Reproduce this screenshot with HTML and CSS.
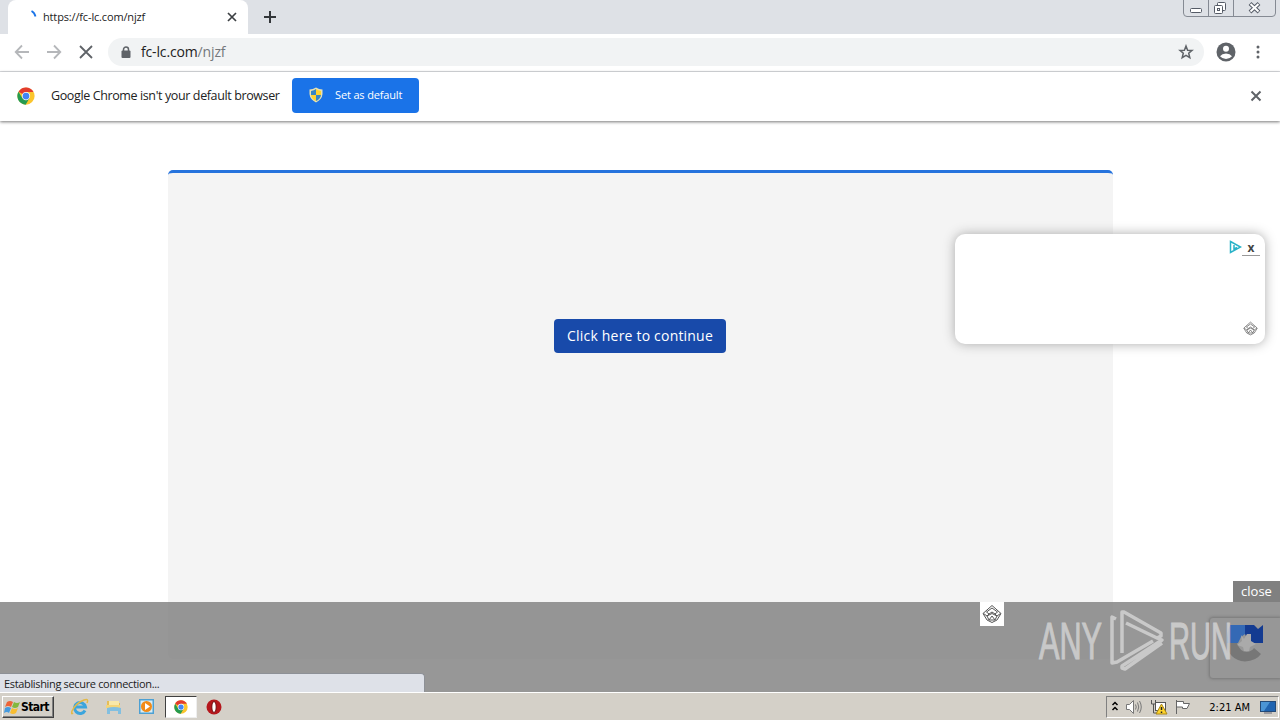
FILE: index.html
```html
<!DOCTYPE html>
<html lang="en">
<head>
    <meta charset="UTF-8">
    <title>https://fc-lc.com/njzf</title>
    <link rel="stylesheet" href="styles.css">
</head>
<body>
    <svg width="0" height="0" class="defs">
        <symbol id="chrome" viewBox="0 0 48 48">
            <circle cx="24" cy="24" r="23" fill="#fbc52d"/>
            <path d="M24 24 L4 12.500 A23 23 0 0 1 44 13 L24 13 Z" fill="#e23b2e"/>
            <path d="M4 12.500 L14.500 30 L24 35 L33.500 29.500 L23 47 A23 23 0 0 1 4 12.500" fill="#259b50"/>
            <circle cx="24" cy="24" r="11" fill="#fff"/>
            <circle cx="24" cy="24" r="9" fill="#4285f4"/>
        </symbol>
        <symbol id="gem" viewBox="0 0 20 20">
            <path d="M10 1.500 L19 9.500 L15 16 L10 18.500 L5 16 L1 9.500 Z M10 4 L15.500 8 L13 10 L10 8 L7 10 L4.500 8 Z M1.500 9.500 L5 12 L7 10 M18.500 9.500 L15 12 L13 10 M5 12 L10 9.500 L15 12 M5 12 L7 16 L10 12 L13 16 L15 12 M7 16 H13" fill="none" stroke="currentColor" stroke-width="1"/>
        </symbol>
    </svg>

    <header class="tabs">
        <div class="tab">
            <svg class="spinner" width="16" height="16"><path d="M7.500 2 Q10.500 3.500 11.500 7.500" fill="none" stroke="#1a73e8" stroke-width="1.800"/></svg>
            <span class="tab-title">https://fc-lc.com/njzf</span>
            <svg width="10" height="10"><path d="M1 1 L9 9 M9 1 L1 9" stroke="#3c4043" stroke-width="1.700"/></svg>
        </div>
        <svg class="new-tab" width="14" height="14"><path d="M7 1 V13 M1 7 H13" stroke="#33363a" stroke-width="2"/></svg>
        <svg class="window-buttons" width="94" height="18" fill="none">
            <path d="M.5 0 V13 Q.5 16.500 4 16.500 H89 Q92.500 16.500 92.500 13 V0 M25.500 0 V16 M50.500 0 V16" stroke="#858a93"/>
            <rect x="7.500" y="8.500" width="11" height="4" rx="1" fill="#fff" stroke="#555b66"/>
            <rect x="34.500" y="2.500" width="8" height="8" rx="1" fill="#fff" stroke="#555b66"/>
            <rect x="31.500" y="5.500" width="8" height="8" rx="1" fill="#fff" stroke="#555b66"/>
            <rect x="34.500" y="8.500" width="2" height="2" stroke="#555b66"/>
            <path d="M67 3.500 L76 12 M76 3.500 L67 12" stroke="#555b66" stroke-width="4"/>
            <path d="M67.500 4 L75.500 11.500 M75.500 4 L67.500 11.500" stroke="#fff" stroke-width="2"/>
        </svg>
    </header>

    <div class="toolbar">
        <svg class="nav" width="16" height="16"><path d="M15 8 H2 M8 1.500 L1.700 8 L8 14.500" fill="none" stroke="#b5b7ba" stroke-width="1.800"/></svg>
        <svg class="nav" width="16" height="16"><path d="M1 8 H14 M8 1.500 L14.300 8 L8 14.500" fill="none" stroke="#b5b7ba" stroke-width="1.800"/></svg>
        <svg class="nav" width="16" height="16"><path d="M2 2 L14 14 M14 2 L2 14" stroke="#5f6368" stroke-width="1.800"/></svg>
        <div class="address">
            <svg width="10" height="13"><path d="M2.500 5 V3.500 A2.500 2.500 0 0 1 7.500 3.500 V5" fill="none" stroke="#5f6368" stroke-width="1.500"/><rect x=".5" y="4.500" width="9" height="7.500" rx="1" fill="#5f6368"/></svg>
            <span class="url">fc-lc.com<span>/njzf</span></span>
            <svg class="star" width="16" height="16"><path d="M8 2 L9.600 6.200 L14 6.400 L10.700 9.200 L11.800 13.600 L8 11.300 L4.200 13.600 L5.300 9.200 L2 6.400 L6.400 6.200 Z" fill="none" stroke="#5f6368" stroke-width="1.500"/></svg>
        </div>
        <svg class="profile" width="20" height="20"><circle cx="10" cy="10" r="9.500" fill="#5f6368"/><circle cx="10" cy="6.800" r="3" fill="#fff"/><path d="M4 14.200 Q6 11.500 10 11.500 T16 14.200 Q13.500 17 10 17 T4 14.200" fill="#fff"/></svg>
        <svg class="menu" width="4" height="16" fill="#5f6368"><circle cx="2" cy="3" r="1.500"/><circle cx="2" cy="8" r="1.500"/><circle cx="2" cy="13" r="1.500"/></svg>
    </div>

    <div class="infobar">
        <svg width="18" height="18"><use href="#chrome"/></svg>
        <span class="info-text">Google Chrome isn't your default browser</span>
        <button class="default-button">
            <svg width="14" height="16"><path d="M7 .5 Q10 2.500 13.500 2.500 V7 Q13 12.500 7 15.500 Q1 12.500 .5 7 V2.500 Q4 2.500 7 .5" fill="#e7e2b4"/><path d="M7 2 V8 H2 V4 Q5 3.500 7 2 M7 8 H12 Q11.500 12 7 14 Z" fill="#3685c4"/><path d="M7 2 Q9 3.500 12 4 V8 H7 Z M7 8 V14 Q2.500 12 2 8 Z" fill="#ffd22e"/></svg>
            <span>Set as default</span>
        </button>
        <svg class="info-close" width="12" height="12"><path d="M1.500 1.500 L10.500 10.500 M10.500 1.500 L1.500 10.500" stroke="#5f6368" stroke-width="2"/></svg>
    </div>

    <main class="page">
        <section class="box">
            <button class="continue">Click here to continue</button>
        </section>

        <aside class="popup">
            <div class="popup-top">
                <svg width="13" height="14"><path d="M1.500 1.500 L11.500 7 L1.500 12.500 Z M5 5 V9 L8 7.500" fill="none" stroke="#29b2c8" stroke-width="1.500"/></svg>
                <span>x</span>
            </div>
            <svg class="popup-gem" width="15" height="15"><use href="#gem"/></svg>
        </aside>

        <div class="bottom-ad">
            <span class="ad-close">close</span>
            <div class="ad-mark"><svg width="20" height="20"><use href="#gem"/></svg></div>
            <div class="captcha">
                <svg width="40" height="40" viewBox="0 0 40 40">
                    <path d="M2 21 H12 Q15 30 22 30 Q27 29 29 26 L36 32 Q31 39 20 39.500 Q3 38 2 21" fill="#777"/>
                    <path d="M5 3 H20 V12 L16 15 L13 21 H2 Q2 10 5 3" fill="#3469b5"/>
                    <path d="M20 3 H29 L33 7 L38 3 V21 H24 L20 12 Z" fill="#143b91"/>
                    <path d="M16 13 L19 17 L22 12 H26 V19 L31 22 L25 25 L24 29 H19 L18 25 L12 23 L17 19 Z" fill="#aaa"/>
                </svg>
            </div>
            <svg class="watermark" width="200" height="70">
                <text transform="translate(3 53) scale(1 1.830)" textLength="63" lengthAdjust="spacingAndGlyphs">ANY</text>
                <text transform="translate(133 53) scale(1 1.830)" textLength="63" lengthAdjust="spacingAndGlyphs">RUN</text>
                <path d="M80 13 L76 11 V57 L81 56 L117 35 M86 47 V6 H88 L125 27 V30 L121 32 L90 17 M126 37 L89 63 L86 62 V60 L126 34 L121 32" fill="none" stroke="#d2d2d2" stroke-width="3.500" stroke-linejoin="round"/>
            </svg>
        </div>
        <div class="status">Establishing secure connection...</div>
    </main>

    <footer class="taskbar">
        <div class="start">
            <svg width="17" height="17"><path d="M3 3 Q6 1 9 3 L7 8 Q4 6 1 8 Z" fill="#ed6437"/><path d="M10 3 Q13 5 16 3 L14 8 Q11 10 8 8 Z" fill="#83b83d"/><path d="M1 9 Q4 7 7 9 L5 14 Q3 12 0 14 Z" fill="#459ade"/><path d="M8 9 Q11 11 14 9 L12 14 Q9 16 6 14 Z" fill="#f8bd31"/></svg>
            <b>Start</b>
        </div>
        <svg class="task ie" width="18" height="18" fill="none"><path d="M14 12.500 A5.500 5.500 0 1 1 14.500 9 H5" stroke="#3ba5dd" stroke-width="3"/><path d="M2 15 Q0 17 1 13 Q5 5 13 2 Q18 0 16 5" stroke="#e3b947" stroke-width="1.500"/></svg>
        <svg class="task" width="18" height="18"><path d="M2 3 H7 L8 5 H15 V13 H2 Z" fill="#e6bd58"/><rect x="4" y="3" width="10" height="6" fill="#f8e8a8"/><path d="M1 7 H15 V10 H1 Z" fill="#f4d579"/><path d="M2 10 Q9 8 16 10 V16 H13 V13 H5 V16 H2 Z" fill="#82bfe0"/></svg>
        <svg class="task player" width="18" height="18"><rect x="1" y="1" width="15" height="15" fill="#4da0d3"/><rect x="2.500" y="2.500" width="12" height="12" fill="#d9edf6"/><circle cx="8.500" cy="8.500" r="5.500" fill="#f28b18"/><path d="M7 5 L12 8.500 L7 12 Z" fill="#fff"/></svg>
        <div class="task active"><svg width="14" height="14"><use href="#chrome"/></svg></div>
        <svg class="task opera" width="16" height="16"><circle cx="8" cy="8" r="7.500" fill="#b5171c"/><ellipse cx="8" cy="8" rx="2.200" ry="5.500" fill="#fff" stroke="#6f080d"/></svg>
        <div class="tray">
            <svg class="chevrons" width="8" height="12"><path d="M1.500 4 L4 1.500 L6.500 4 M1.500 9 L4 6.500 L6.500 9" fill="none" stroke="#000" stroke-width="1.500"/></svg>
            <svg width="18" height="16" fill="none"><path d="M1.500 5.500 H4.500 L8.500 1.500 V14.500 L4.500 10.500 H1.500 Z" fill="#fff" stroke="#777"/><path d="M10.500 5.500 Q12 8 10.500 10.500 M12.500 3.500 Q15 8 12.500 12.500 M14.500 2 Q18 8 14.500 14" stroke="#777"/></svg>
            <svg width="18" height="16"><rect x="5.500" y="3.500" width="10" height="8" fill="#fff" stroke="#555"/><path d="M1.500 1 V5 H5.500 V1 M3.500 5 V14 H10" fill="none" stroke="#555"/><path d="M11.500 5 L17 15 H6 Z" fill="#ffd42a" stroke="#a98618"/><path d="M11.500 8 V11 M11.500 12.500 V14" stroke="#222" stroke-width="1.500"/></svg>
            <svg width="18" height="16"><path d="M2.500 1 V15 M2.500 2.500 H9.500 V4.500 H15.500 L13 9.500 H8.500 V8 H2.500" fill="#fff" stroke="#666"/></svg>
            <span class="clock">2:21 AM</span>
            <svg class="desktop" width="16" height="14"><rect x=".5" y="1.500" width="15" height="10" fill="#2064b0" stroke="#244a77"/><path d="M1 2 H10 L4 11 H1 Z" fill="#4b95d5"/><path d="M4 13 H12" stroke="#667"/></svg>
        </div>
    </footer>
</body>
</html>
```
FILE: styles.css
```css
* {
    box-sizing: border-box;
}
body {
    margin: 0;
    width: 1280px;
    height: 720px;
    overflow: hidden;
    display: flex;
    flex-direction: column;
    font-family: "DejaVu Sans Condensed", "Open Sans", sans-serif;
    font-size: 11px;
    color: #222;
    background: #fff;
}
svg {
    display: block;
    flex-shrink: 0;
}
span, b {
    white-space: nowrap;
}
button {
    border: 0;
    color: #fff;
}
.defs {
    position: absolute;
}
.tabs {
    height: 34px;
    flex-shrink: 0;
    display: flex;
    align-items: flex-start;
    background: #dee1e6;
    padding-left: 8px;
}
.tab {
    width: 240px;
    height: 34px;
    background: #fff;
    border-radius: 8px 8px 0 0;
    display: flex;
    align-items: center;
    padding: 0 11px 0 16px;
}
.spinner {
    margin-right: 3px;
}
.tab-title {
    flex: 1;
    padding-bottom: 2px;
    font-family: "Open Sans", sans-serif;
    letter-spacing: -0.15px;
}
.new-tab {
    margin: 10px 0 0 15px;
}
.window-buttons {
    margin-left: auto;
    margin-right: 3px;
}
.toolbar {
    height: 38px;
    flex-shrink: 0;
    display: flex;
    align-items: center;
    padding: 0 20px 1px 14px;
    border-bottom: 1px solid #dadce0;
}
.nav {
    margin-right: 16px;
}
.nav:nth-child(3) {
    margin-right: 14px;
}
.address {
    flex: 1;
    height: 28px;
    border-radius: 14px;
    background: #f1f3f4;
    display: flex;
    align-items: center;
    padding: 0 10px 0 13px;
}
.url {
    font: 14px "Open Sans", sans-serif;
    letter-spacing: -0.15px;
    margin-left: 10px;
    padding-bottom: 1px;
}
.url span {
    color: #73777b;
}
.star {
    margin-left: auto;
}
.profile {
    margin: 0 20px 0 12px;
}
.infobar {
    height: 49px;
    flex-shrink: 0;
    display: flex;
    align-items: center;
    padding: 0 18px 2px 17px;
    position: relative;
    box-shadow: 0 1px 3px #777;
}
.info-text {
    width: 229px;
    margin: 0 12px 0 16px;
    font: 12.5px "Open Sans", sans-serif;
    letter-spacing: -0.38px;
}
.default-button {
    width: 127px;
    height: 35px;
    background: #1a73e8;
    border-radius: 4px;
    display: flex;
    align-items: center;
    padding: 0 17px 1px;
    gap: 12px;
    font: 11px "Open Sans", sans-serif;
    letter-spacing: -0.15px;
    /* sits a pixel above the text next to it */
    margin-bottom: 1px;
}
.info-close {
    margin-left: auto;
}
.page {
    flex: 1;
    position: relative;
    padding-top: 49px;
}
.box {
    width: 945px;
    height: 489px;
    margin-left: 168px;
    background: #f4f4f4;
    border-top: 3px solid #2673dd;
    border-radius: 5px;
    display: flex;
    justify-content: center;
    align-items: flex-start;
    padding: 146px 1px 0 0;
}
.continue {
    width: 172px;
    height: 34px;
    padding: 0 0 2px;
    border-radius: 4px;
    background: #184aaa;
    font: 14px "Open Sans", sans-serif;
    letter-spacing: 0.2px;
}
.popup {
    position: absolute;
    left: 955px;
    top: 113px;
    width: 310px;
    height: 110px;
    padding: 6px 5px 8px;
    background: #fff;
    border-radius: 10px;
    box-shadow: 0 0 12px #aaa;
    display: flex;
    flex-direction: column;
    justify-content: space-between;
    align-items: flex-end;
}
.popup-top {
    display: flex;
}
.popup-top span {
    width: 18px;
    height: 16px;
    border-bottom: 1px solid #999;
    text-align: center;
    font: bold 12px/16px "Open Sans", sans-serif;
    color: #444;
}
.popup-gem {
    margin-right: 2px;
    color: #666;
}
.bottom-ad {
    position: absolute;
    left: 0;
    right: 0;
    bottom: 0;
    height: 90px;
    background: rgba(128, 128, 128, 0.82);
}
.ad-close {
    position: absolute;
    right: 0;
    top: -21px;
    width: 47px;
    height: 21px;
    background: #808080;
    color: #fff;
    text-align: center;
    font: 13px/20px "Open Sans", sans-serif;
}
.ad-mark {
    position: absolute;
    left: 980px;
    top: 0;
    width: 24px;
    height: 24px;
    padding: 2px;
    background: #fff;
    color: #555;
}
.captcha {
    position: absolute;
    right: 0;
    top: 16px;
    width: 70px;
    height: 60px;
    padding: 4px 15px;
    border-radius: 3px 0 0 3px;
    box-shadow: 0 0 3px 1px #777;
}
.watermark {
    position: absolute;
    left: 1036px;
    top: 4px;
    opacity: 0.85;
}
.watermark text {
    font: 28px "Liberation Sans", sans-serif;
    fill: #d2d2d2;
    stroke: #d2d2d2;
    stroke-width: 0.6px;
}
.status {
    position: absolute;
    left: 0;
    bottom: 0;
    width: 425px;
    height: 19px;
    padding-left: 4px;
    border: solid #8d9096;
    border-width: 1px 1px 0 0;
    border-radius: 0 4px 0 0;
    background: #dee1e8;
    line-height: 19px;
    font-family: "Open Sans", sans-serif;
    letter-spacing: -0.34px;
}
.taskbar {
    height: 28px;
    flex-shrink: 0;
    display: flex;
    align-items: center;
    padding: 1px 1px 0 2px;
    background: #d4d0c8;
    border-top: 1px solid #fff;
    color: #000;
}
.start {
    width: 52px;
    height: 22px;
    display: flex;
    align-items: center;
    border: 1px solid;
    border-color: #fff #404040 #404040 #fff;
    box-shadow: inset -1px -1px #808080;
    padding-left: 1px;
    font-size: 12px;
    letter-spacing: -0.6px;
}
.task {
    margin-left: 16px;
}
.ie {
    margin-left: 17px;
}
.player {
    margin-left: 15px;
}
.active {
    width: 32px;
    height: 22px;
    margin-left: 9px;
    padding: 3px 8px;
    background: #fff;
    border: 1px solid;
    border-color: #404040 #eee #eee #404040;
}
.opera {
    margin-left: 9px;
}
.tray {
    width: 173px;
    height: 22px;
    margin-left: auto;
    display: flex;
    align-items: center;
    gap: 6px;
    padding: 0 2px 0 4px;
    border: 1px solid;
    border-color: #808080 #fff #fff #808080;
}
.tray svg:nth-child(3) {
    margin-left: 1px;
}
.clock {
    margin-left: auto;
}
.desktop {
    margin-left: 4px;
}
```
